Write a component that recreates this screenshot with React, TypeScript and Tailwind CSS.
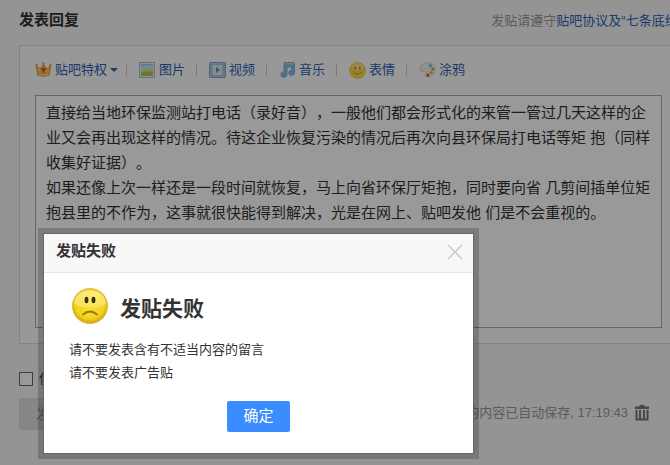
import { useState } from 'react'
import type { ReactNode } from 'react'

const draft = [
  '直接给当地环保监测站打电话（录好音），一般他们都会形式化的来管一管过几天这样的企',
  '业又会再出现这样的情况。待这企业恢复污染的情况后再次向县环保局打电话等矩 抱（同样',
  '收集好证据）。',
  '如果还像上次一样还是一段时间就恢复，马上向省环保厅矩抱，同时要向省 几剪间插单位矩',
  '抱县里的不作为，这事就很快能得到解决，光是在网上、贴吧发他 们是不会重视的。',
].join('\n')

function CrownIcon() {
  return (
    <svg width="17" height="16" viewBox="0 0 17 16" aria-hidden="true">
      <path d="M1.500 4.500 5 7l3.500-4.500L12 7l3.500-2.500-1.200 8.700q-5.800 2.200-11.600 0z" fill="#ffbe4a" stroke="#e09a3c" strokeWidth="1" />
      <path d="M2.800 11q5.700 1.900 11.400 0l-.3 2.200q-5.400 1.900-10.800 0z" fill="#ffd88a" stroke="#e09a3c" strokeWidth=".5" />
      <path d="M6.500 6.500q2-1.500 4 0v1.700H9.400v2.600H7.600V8.200H6.500z" fill="#e8402c" />
      <circle cx="1.700" cy="3.300" r="1.300" fill="#f5a45c" />
      <circle cx="8.500" cy="1.700" r="1.400" fill="#f5a45c" />
      <circle cx="15.300" cy="3.300" r="1.300" fill="#f5a45c" />
      <path d="M3.300 7.200 5 8.600M13.700 7.200 12 8.600" stroke="#fff0bd" strokeWidth="1" />
    </svg>
  )
}

function PictureIcon() {
  return (
    <svg width="16" height="16" viewBox="0 0 16 16" aria-hidden="true">
      <rect x=".5" y=".5" width="15" height="15" fill="#f1f6fa" stroke="#a5bdd2" />
      <path d="M2 2h12v7H2z" fill="#8cc5e8" />
      <path d="M2 4q4-2 12-.5V8H2z" fill="#bfe2f2" />
      <path d="M2 8.500q6-2.500 12-1V14H2z" fill="#d8de72" />
      <path d="M2 10.500q6-1.500 12-.5v4H2z" fill="#b1c34b" />
    </svg>
  )
}

function VideoIcon() {
  return (
    <svg width="17" height="16" viewBox="0 0 17 16" aria-hidden="true">
      <rect x=".5" y=".5" width="16" height="15" rx="1" fill="#9ab7d9" stroke="#86a3cb" />
      <rect x="3.500" y="3" width="10" height="10" fill="#dceaf3" />
      <path d="M2 1.800h13M2 14.200h13" stroke="#f2f7fb" strokeWidth="1" strokeDasharray="1 1" />
      <path d="M1.800 4v9M15.200 4v9" stroke="#d4e2f0" strokeWidth="1" strokeDasharray="1 1" />
      <path d="M7 5v6l4-3z" fill="#4b9bcf" />
    </svg>
  )
}

function MusicIcon() {
  return (
    <svg width="16" height="16" viewBox="0 0 16 16" aria-hidden="true">
      <path
        d="M5 1.500Q5 .5 6 .5h8.500q1 0 1 1v9.300a2.900 2.400 0 1 1-3-2.300V5H8v7.600A3.100 2.700 0 1 1 5 9.900z"
        fill="#86bfe2"
        stroke="#6ea8d0"
        strokeWidth=".8"
      />
      <path d="M6 1.800h8.500" stroke="#bfe1f2" />
    </svg>
  )
}

function SmileIcon() {
  return (
    <svg width="17" height="17" viewBox="0 0 17 17" aria-hidden="true">
      <circle cx="8.500" cy="8.500" r="8" fill="#ffd848" stroke="#eebb48" strokeWidth=".6" />
      <ellipse cx="8.500" cy="5" rx="5.800" ry="3.600" fill="#ffe57a" />
      <ellipse cx="6.200" cy="6" rx=".8" ry="1.600" fill="#a87a34" />
      <ellipse cx="10.800" cy="6" rx=".8" ry="1.600" fill="#a87a34" />
      <path d="M4 9.600q4.500 4.800 9 0" fill="none" stroke="#c08d35" strokeWidth="1" />
    </svg>
  )
}

function PaletteIcon() {
  return (
    <svg width="17" height="16" viewBox="0 0 17 16" aria-hidden="true">
      <path
        d="M.8 6.500C2 2 7 .3 11 .8s5.600 4 5 7.700-4.200 7-7.300 6.800-3-2-2-3.600-.6-2.700-2.400-2.300S.4 8.700.8 6.500z"
        fill="#f2eee4"
        stroke="#d8d2c4"
        strokeWidth=".8"
      />
      <circle cx="11.400" cy="3.800" r="1.700" fill="#7ebde4" />
      <circle cx="13.800" cy="7.200" r="1.400" fill="#8bbd4b" />
      <circle cx="12.200" cy="10.600" r="1.500" fill="#f0a23c" />
      <circle cx="8.900" cy="13" r="1.500" fill="#ce4a38" />
    </svg>
  )
}

function SadFace() {
  return (
    <svg width="38" height="38" viewBox="0 0 38 38" aria-hidden="true">
      <defs>
        <radialGradient id="face" cx=".5" cy=".45" r=".55">
          <stop offset="0" stopColor="#fbe234" />
          <stop offset=".75" stopColor="#f2d31c" />
          <stop offset="1" stopColor="#cf9d0c" />
        </radialGradient>
        <linearGradient id="shine" x1="0" y1="0" x2="0" y2="1">
          <stop offset="0" stopColor="#fdf3a8" />
          <stop offset="1" stopColor="#fae768" />
        </linearGradient>
      </defs>
      <circle cx="19" cy="18" r="17.600" fill="url(#face)" stroke="#dcb24a" strokeWidth=".8" />
      <path d="M3 16C3.500 8 10 2.500 19 2.500S34.500 8 35 16q-6 4-16 3.500T3 16z" fill="url(#shine)" opacity=".7" />
      <ellipse cx="15.500" cy="12" rx="1.900" ry="3.200" fill="#3d2b07" />
      <ellipse cx="22.500" cy="12" rx="1.900" ry="3.200" fill="#3d2b07" />
      <path d="M12 26.500q7-6 14 0" fill="none" stroke="#9c7516" strokeWidth="1.800" strokeLinecap="round" />
    </svg>
  )
}

function TrashIcon() {
  return (
    <svg width="16" height="16" viewBox="0 0 16 16" aria-hidden="true">
      <path d="M5.500 0h5v1.500H15V4H1V1.500h4.500z" fill="#777" />
      <path d="M2.500 5v9.500h11V5M6 5v9.500M10 5v9.500" fill="none" stroke="#777" strokeWidth="2" />
    </svg>
  )
}

const tools: { label: string; icon: ReactNode; caret?: boolean }[] = [
  { label: '贴吧特权', icon: <CrownIcon />, caret: true },
  { label: '图片', icon: <PictureIcon /> },
  { label: '视频', icon: <VideoIcon /> },
  { label: '音乐', icon: <MusicIcon /> },
  { label: '表情', icon: <SmileIcon /> },
  { label: '涂鸦', icon: <PaletteIcon /> },
]

function Toolbar() {
  return (
    <div className="flex h-[49px] items-center pb-px">
      {tools.map((tool, i) => (
        <div key={tool.label} className="flex items-center">
          {i > 0 && <span className="mr-3 h-3 w-px bg-[#ccc]" />}
          <button
            type="button"
            className={`flex h-6 items-center gap-[3px] text-[13px] whitespace-nowrap text-[#2d64b3] ${tool.caret ? 'mr-2' : 'mr-[11px]'}`}
          >
            <span className="flex w-[17px] shrink-0">{tool.icon}</span>
            {tool.label}
            {tool.caret && <span className="border-x-4 border-t-4 border-x-transparent border-t-[#2d64b3]" />}
          </button>
        </div>
      ))}
    </div>
  )
}

function FailDialog({ onClose }: { onClose: () => void }) {
  return (
    <div className="fixed top-[228px] left-[38px] w-[441px] bg-black/20 p-[5px]">
      <div role="dialog" aria-modal="true" aria-labelledby="dialog-title" className="border border-[#666] bg-white text-[#333]">
        <div className="flex h-[39px] items-center justify-between border-b border-[#e3e3e3] bg-[#f8f8f8] pr-[10px] pb-[3px] pl-3">
          <h2 id="dialog-title" className="text-[15px] font-bold">发贴失败</h2>
          <button type="button" aria-label="关闭" onClick={onClose}>
            <svg width="16" height="16" viewBox="0 0 16 16" aria-hidden="true">
              <path d="M1 1l14 14M15 1L1 15" stroke="#ccc" strokeWidth="1.500" />
            </svg>
          </button>
        </div>
        <div className="px-[25px] pt-[13px] pb-[21px]">
          <div className="flex items-center gap-[11px] pl-[2px]">
            <SadFace />
            <h3 className="pt-1 text-[21px] leading-[38px] font-bold">发贴失败</h3>
          </div>
          <div className="mt-[10px] text-[13px] leading-[23px]">
            <p>请不要发表含有不适当内容的留言</p>
            <p>请不要发表广告贴</p>
          </div>
          <div className="mt-[17px] flex justify-center">
            <button type="button" onClick={onClose} className="h-[31px] w-[63px] rounded-xs bg-[#3b8cff] text-[15px] text-white">
              确定
            </button>
          </div>
        </div>
      </div>
    </div>
  )
}

export default function App() {
  const [text, setText] = useState(draft)
  const [failed, setFailed] = useState(true)

  return (
    <div className="min-h-screen overflow-hidden bg-[#f7f7f7] font-['Liberation_Sans','Noto_Sans_CJK_SC',sans-serif] [text-spacing-trim:space-all]">
      <main className="-mr-2 pl-[19px]">
        <div className="flex h-[45px] items-center justify-between pb-1 whitespace-nowrap">
          <h1 className="text-[15px] font-bold text-[#333]">发表回复</h1>
          <p className="-mr-1 text-[13px] text-[#999]">
            发贴请遵守<a href="#rules" className="text-[#2d64b3]">贴吧协议及“七条底线”</a>
          </p>
        </div>

        <section className="border border-[#dcdcdc] bg-[#fdfdfd] px-[15px] pb-[15px]">
          <Toolbar />
          <textarea
            aria-label="回复内容"
            value={text}
            onChange={(e) => setText(e.target.value)}
            wrap="off"
            spellCheck={false}
            className="block h-[233px] w-full resize-none overflow-hidden border border-[#aaa] bg-white px-[10px] pt-1 text-[15px] leading-[25px] text-[#333]"
          />
        </section>

        <div className="mt-6 flex h-[22px] items-center gap-[6px]">
          <input id="signature" type="checkbox" className="size-[14px] appearance-none border border-[#666] bg-white checked:bg-[#666]" />
          <label htmlFor="signature" className="text-[13px] text-[#333]">使用签名档</label>
        </div>

        <div className="mt-2 flex items-center justify-between pr-7">
          <button type="button" className="h-8 w-[68px] rounded-xs bg-[#e0e0e0] text-[15px] text-[#999]">发 表</button>
          <div className="flex items-center gap-[6px] pb-[2px] text-[13px] text-[#999]">
            <span>您输入的内容已自动保存, 17:19:43</span>
            <button type="button" aria-label="清空草稿" onClick={() => setText('')}>
              <TrashIcon />
            </button>
          </div>
        </div>
      </main>

      {failed && (
        <>
          <div className="fixed inset-0 bg-black/40" />
          <FailDialog onClose={() => setFailed(false)} />
        </>
      )}
    </div>
  )
}
